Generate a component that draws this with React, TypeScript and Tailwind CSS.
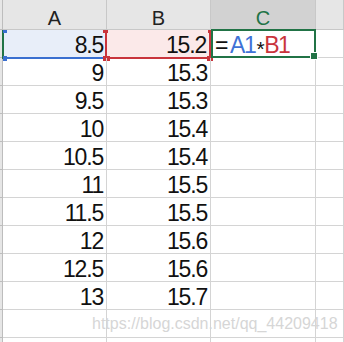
import React from "react";

const rows: [string, string][] = [
  ["8.5", "15.2"],
  ["9", "15.3"],
  ["9.5", "15.3"],
  ["10", "15.4"],
  ["10.5", "15.4"],
  ["11", "15.5"],
  ["11.5", "15.5"],
  ["12", "15.6"],
  ["12.5", "15.6"],
  ["13", "15.7"],
  ["", ""],
  ["", ""],
];

const font = { fontFamily: '"Liberation Sans", Arial, sans-serif' };

const BLUE = "bg-[#3a6fd0]";
const RED = "bg-[#c9343c]";

function HeaderCell({ label, active }: { label: string; active?: boolean }) {
  return (
    <div
      className={`h-[30px] flex items-end justify-center pb-[1px] border-r border-b border-[#c8c8c8] text-[20px] leading-none ${
        active ? "bg-[#d2d2d2] text-[#217346]" : "bg-[#e6e6e6] text-[#222]"
      }`}
    >
      {label}
    </div>
  );
}

function Cell({ children, className = "" }: { children?: React.ReactNode; className?: string }) {
  return (
    <div
      className={`relative h-[28px] flex items-end justify-end pr-[3px] border-r border-b border-[#d4d4d4] text-[23px] leading-none tracking-[-1.2px] text-[#111] ${className}`}
    >
      {children}
    </div>
  );
}

export default function App() {
  return (
    <div className="relative w-[344px] h-[342px] overflow-hidden bg-white" style={font}>
      <div className="grid grid-cols-[3px_104px_104px_105px_1fr]">
        <div className="h-[30px] bg-[#e6e6e6] border-r border-b border-[#bdbdbd]" />
        <HeaderCell label="A" />
        <HeaderCell label="B" />
        <HeaderCell label="C" active />
        <HeaderCell label="" />

        {rows.map(([a, b], i) => (
          <React.Fragment key={i}>
            <div className="h-[28px] bg-[#e6e6e6] border-r border-b border-[#bdbdbd]" />
            {i === 0 ? (
              <>
                {/* A1: blue reference */}
                <Cell className="bg-[#e8eef9]">
                  <span className="relative z-10">{a}</span>
                  <div className="absolute -left-[1px] top-0 w-[2px] h-[29px] bg-[#217346]" />
                  <div className={`absolute left-0 top-0 w-[4px] h-[3px] ${BLUE}`} />
                  <div className={`absolute left-[1px] right-0 -bottom-[2px] h-[2px] ${BLUE}`} />
                  <div className={`absolute left-0 -bottom-[4px] w-[4px] h-[5px] ${BLUE}`} />
                </Cell>
                {/* B1: red reference */}
                <Cell className="bg-[#fbe9e9] border-l-2 border-l-[#c9343c] -ml-[2px] border-r-[#c9343c] border-r-2">
                  <span className="relative z-10">{b}</span>
                  <div className={`absolute -left-[2px] -right-[2px] -bottom-[2px] h-[2px] ${RED}`} />
                  <div className={`absolute -left-[4px] top-0 w-[5px] h-[3px] ${RED}`} />
                  <div className={`absolute -left-[4px] -bottom-[4px] w-[7px] h-[5px] ${RED}`} />
                  <div className={`absolute -right-[3px] top-0 w-[4px] h-[3px] ${RED}`} />
                  <div className={`absolute -right-[4px] -bottom-[4px] w-[6px] h-[5px] ${RED}`} />
                </Cell>
                {/* C1: active cell being edited */}
                <Cell className="justify-start pl-[4px] z-10">
                  <span className="tracking-[-1.4px]">
                    =<span className="text-[#3f72d6] ml-[3px]">A1</span>
                    <span className="relative top-[3px] text-[21px] mx-[1px]">*</span>
                    <span className="text-[#c9343c]">B1</span>
                  </span>
                  <div className="absolute left-0 -top-px -right-px -bottom-px border-2 border-[#217346]" />
                  <div className="absolute -right-[3px] -bottom-[3px] w-[8px] h-[8px] bg-white p-[1px]">
                    <div className="w-full h-full bg-[#217346]" />
                  </div>
                </Cell>
              </>
            ) : (
              <>
                <Cell>{a}</Cell>
                <Cell>{b}</Cell>
                <Cell />
              </>
            )}
            <Cell />
          </React.Fragment>
        ))}
      </div>

      <div className="absolute left-[92px] top-[316px] text-[16px] leading-none text-[#d6d6d6] whitespace-nowrap">
        https://blog.csdn.net/qq_44209418
      </div>
    </div>
  );
}
